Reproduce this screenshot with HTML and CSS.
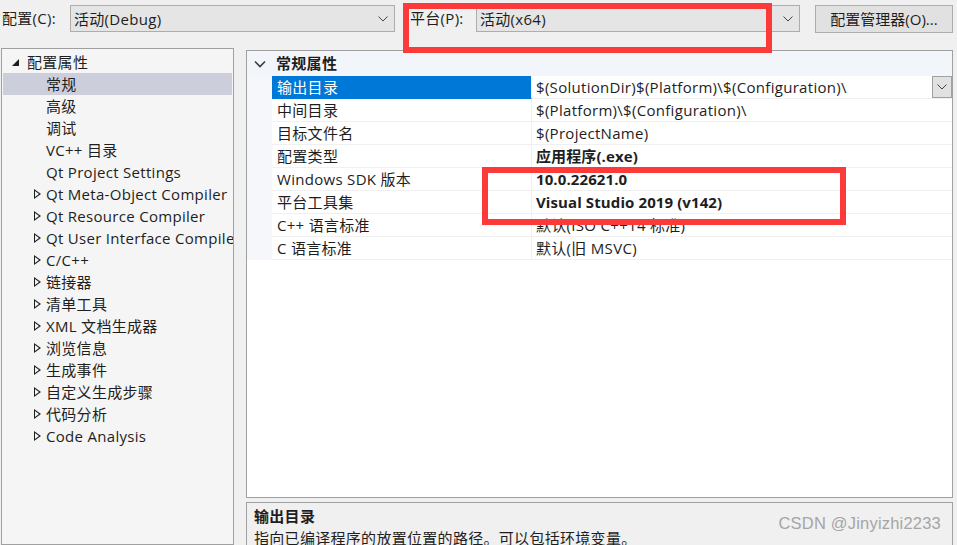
FILE: index.html
```html
<!DOCTYPE html>
<html lang="zh-CN">
<head>
<meta charset="utf-8">
<title>属性页</title>
<link rel="stylesheet" href="styles.css">
</head>
<body>
<div class="page">
  <div class="toolbar">
    <span class="tb-label cfg-label">配置(C):</span>
    <div class="combo combo-cfg"><span>活动(Debug)</span><svg class="chev" width="10" height="6" viewBox="0 0 10 6"><path d="M0.5 0.5 L5 5 L9.5 0.5" fill="none" stroke="#444" stroke-width="1"/></svg></div>
    <span class="tb-label plat-label">平台(P):</span>
    <div class="combo combo-plat"><span>活动(x64)</span><svg class="chev" width="10" height="6" viewBox="0 0 10 6"><path d="M0.5 0.5 L5 5 L9.5 0.5" fill="none" stroke="#444" stroke-width="1"/></svg></div>
    <div class="btn">配置管理器(O)...</div>
  </div>
  <div class="main">
    <div class="tree">
      <div class="node top"><span class="tri-open"></span>配置属性</div>
      <div class="node leaf sel">常规</div>
      <div class="node leaf">高级</div>
      <div class="node leaf">调试</div>
      <div class="node leaf">VC++ 目录</div>
      <div class="node leaf">Qt Project Settings</div>
      <div class="node"><span class="tri"></span>Qt Meta-Object Compiler</div>
      <div class="node"><span class="tri"></span>Qt Resource Compiler</div>
      <div class="node"><span class="tri"></span>Qt User Interface Compiler</div>
      <div class="node"><span class="tri"></span>C/C++</div>
      <div class="node"><span class="tri"></span>链接器</div>
      <div class="node"><span class="tri"></span>清单工具</div>
      <div class="node"><span class="tri"></span>XML 文档生成器</div>
      <div class="node"><span class="tri"></span>浏览信息</div>
      <div class="node"><span class="tri"></span>生成事件</div>
      <div class="node"><span class="tri"></span>自定义生成步骤</div>
      <div class="node"><span class="tri"></span>代码分析</div>
      <div class="node"><span class="tri"></span>Code Analysis</div>
    </div>
    <div class="right">
      <div class="grid">
        <div class="g-header">
          <div class="gutter"><svg width="12" height="8" viewBox="0 0 12 8"><path d="M1 1.5 L6 6.5 L11 1.5" fill="none" stroke="#3c3c3c" stroke-width="1.6"/></svg></div>
          <div class="g-title">常规属性</div>
        </div>
        <div class="g-row">
          <div class="gutter"></div>
          <div class="g-name selected">输出目录</div>
          <div class="g-val">$(SolutionDir)$(Platform)\$(Configuration)\<span class="g-drop"><svg width="10" height="6" viewBox="0 0 10 6"><path d="M0.5 0.5 L5 5 L9.5 0.5" fill="none" stroke="#444" stroke-width="1"/></svg></span></div>
        </div>
        <div class="g-row">
          <div class="gutter"></div>
          <div class="g-name">中间目录</div>
          <div class="g-val">$(Platform)\$(Configuration)\</div>
        </div>
        <div class="g-row">
          <div class="gutter"></div>
          <div class="g-name">目标文件名</div>
          <div class="g-val">$(ProjectName)</div>
        </div>
        <div class="g-row">
          <div class="gutter"></div>
          <div class="g-name">配置类型</div>
          <div class="g-val bold">应用程序(.exe)</div>
        </div>
        <div class="g-row">
          <div class="gutter"></div>
          <div class="g-name">Windows SDK 版本</div>
          <div class="g-val bold">10.0.22621.0</div>
        </div>
        <div class="g-row">
          <div class="gutter"></div>
          <div class="g-name">平台工具集</div>
          <div class="g-val bold">Visual Studio 2019 (v142)</div>
        </div>
        <div class="g-row">
          <div class="gutter"></div>
          <div class="g-name">C++ 语言标准</div>
          <div class="g-val">默认(ISO C++14 标准)</div>
        </div>
        <div class="g-row">
          <div class="gutter"></div>
          <div class="g-name">C 语言标准</div>
          <div class="g-val">默认(旧 MSVC)</div>
        </div>
      </div>
      <div class="desc">
        <div class="desc-title">输出目录</div>
        <div class="desc-text">指向已编译程序的放置位置的路径。可以包括环境变量。</div>
        <div class="watermark">CSDN @Jinyizhi2233</div>
      </div>
    </div>
  </div>
  <div class="mark mark-top"></div>
  <div class="mark mark-mid"></div>
</div>
</body>
</html>
```

FILE: styles.css
```css
* { box-sizing: border-box; }
html, body { margin: 0; padding: 0; }
body {
  background: #f0f0f0;
  font-family: "Open Sans", "Noto Sans CJK SC", sans-serif;
  font-size: 15px;
  letter-spacing: 0.3px;
  color: #1e1e1e;
  width: 957px;
  height: 545px;
  overflow: hidden;
}
.page { position: relative; width: 957px; height: 545px; }

.toolbar {
  display: flex;
  align-items: flex-start;
  height: 48px;
  padding-top: 5px;
}
.tb-label { line-height: 27px; white-space: nowrap; }
.cfg-label { margin-left: 2px; width: 68px; }
.plat-label { margin-left: 15px; width: 66px; }
.combo {
  height: 27px;
  background: #e5e5e5;
  border: 1px solid #adadad;
  display: flex;
  align-items: center;
  justify-content: space-between;
  padding: 0 6px 0 3px;
}
.combo-cfg { width: 325px; }
.combo-plat { width: 324px; }
.btn {
  margin-left: 15px;
  width: 138px;
  height: 28px;
  background: #e1e1e1;
  border: 1px solid #adadad;
  text-align: center;
  line-height: 26px;
  white-space: nowrap;
  letter-spacing: 0;
}

.main { display: flex; align-items: flex-start; }
.tree {
  margin-left: 1px;
  width: 233px;
  height: 497px;
  background: #f5f5f5;
  border: 1px solid #a0a0a0;
  padding: 2px 1px 0 1px;
  overflow: hidden;
}
.node {
  height: 22px;
  line-height: 22px;
  white-space: nowrap;
  padding-left: 43px;
  position: relative;
}
.node.top { padding-left: 24px; }
.node.sel { background: #cccedb; }
.tri-open {
  position: absolute;
  left: 9px; top: 8px;
  width: 0; height: 0;
  border-left: 7px solid transparent;
  border-bottom: 7px solid #1e1e1e;
}
.tri {
  position: absolute;
  left: 31px; top: 6px;
  width: 0; height: 0;
  border-top: 5px solid transparent;
  border-bottom: 5px solid transparent;
  border-left: 7px solid #1e1e1e;
}
.tri::after {
  content: "";
  position: absolute;
  left: -6px; top: -3px;
  border-top: 3px solid transparent;
  border-bottom: 3px solid transparent;
  border-left: 4px solid #f5f5f5;
}

.right {
  margin-left: 12px;
  width: 707px;
  display: flex;
  flex-direction: column;
  gap: 4px;
  padding-top: 2px;
}
.grid {
  height: 448px;
  background: #fff;
  border: 1px solid #a0a0a0;
}
.g-header {
  display: flex;
  height: 25px;
  background: #f2f5fa;
}
.g-header .gutter { display: flex; align-items: center; justify-content: center; background: transparent; padding-top: 1px; }
.g-title { font-weight: bold; line-height: 24px; padding-left: 4px; }
.g-row {
  display: flex;
  height: 23px;
}
.gutter { width: 25px; flex: none; background: #f5f7fa; }
.g-name {
  width: 260px;
  flex: none;
  line-height: 22px;
  padding-left: 5px;
  border-bottom: 1px solid #f0f0f0;
  border-right: 1px solid #f0f0f0;
  white-space: nowrap;
}
.g-name.selected { background: #0078d7; color: #fff; border-bottom-color: #0078d7; }
.g-val {
  flex: 1;
  position: relative;
  line-height: 22px;
  padding-left: 4px;
  border-bottom: 1px solid #f0f0f0;
  white-space: nowrap;
}
.g-val.bold { font-weight: bold; letter-spacing: 0.1px; }
.g-drop {
  position: absolute;
  right: 0; top: 0;
  width: 20px; height: 22px;
  background: #e1e1e1;
  border: 1px solid #a0a0a0;
  display: flex; align-items: center; justify-content: center;
}

.desc {
  position: relative;
  height: 50px;
  background: #f0f0f0;
  border: 1px solid #a0a0a0;
  padding: 2px 7px;
}
.desc-title { font-weight: bold; line-height: 22px; }
.desc-text { line-height: 22px; white-space: nowrap; }
.watermark {
  position: absolute;
  right: 11px; top: 11px;
  color: #a5a5a5;
  font-family: "Liberation Sans", sans-serif;
  font-size: 16.5px;
  letter-spacing: 0.2px;
}

.mark {
  position: absolute;
  border: 6px solid #fc3a3a;
  pointer-events: none;
}
.mark-top { left: 403px; top: 3px; width: 369px; height: 50px; }
.mark-mid { left: 482px; top: 167px; width: 364px; height: 58px; }
```
